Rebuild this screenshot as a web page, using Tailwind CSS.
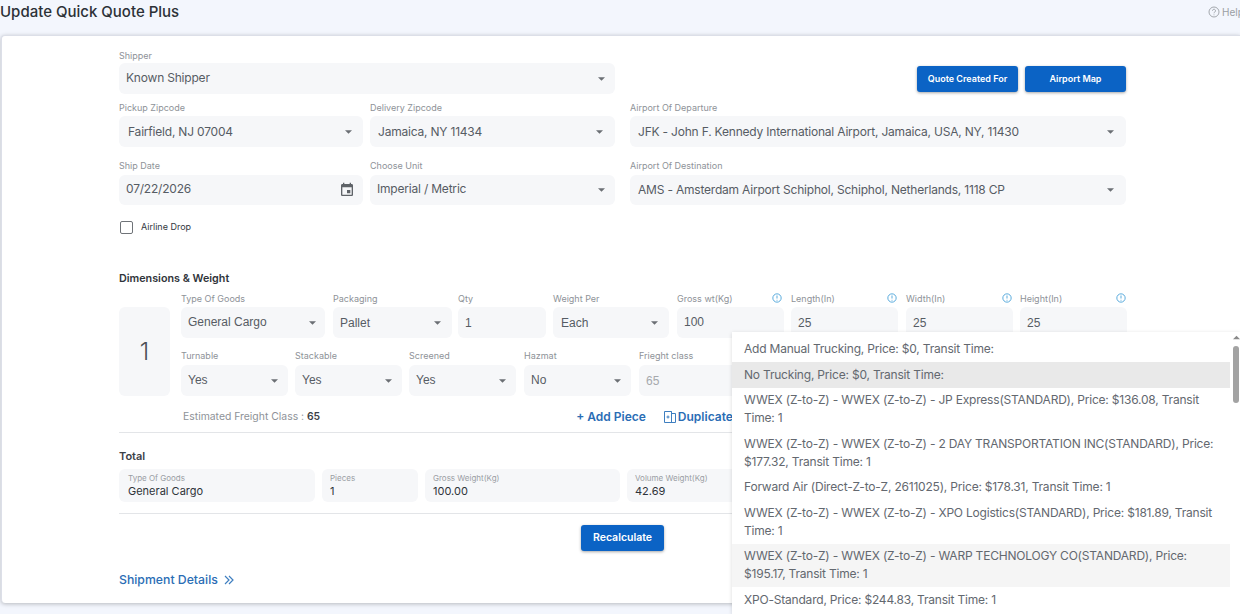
<!DOCTYPE html>
<html lang="en">
<head>
  <meta charset="UTF-8" />
  <title>Update Quick Quote Plus</title>
  <script src="https://cdn.jsdelivr.net/npm/@tailwindcss/browser@4"></script>
</head>
<body class="relative w-[1240px] h-[614px] overflow-hidden bg-[#f3f6fd] font-['Inter','Liberation_Sans',sans-serif] text-[#565c64]">

  <header class="h-[35px] flex justify-between pr-0">
    <h1 class="text-[15px] leading-[24px] font-medium text-[#2c3137]">Update Quick Quote Plus</h1>
    <div class="flex items-start gap-[2px] pt-[6px] text-[10px] leading-[13px] text-[#9a9ea4] w-[32px] overflow-hidden shrink-0">
      <svg class="w-[12px] h-[12px] shrink-0" viewBox="0 0 24 24" fill="none" stroke="#9a9ea4" stroke-width="1.8"><circle cx="12" cy="12" r="10"/><path d="M9 9.5a3 3 0 1 1 4.6 2.5c-1 .7-1.6 1.2-1.6 2.5"/><path d="M12 17v1.5"/></svg>
      <span>Help</span>
    </div>
  </header>

  <main class="ml-px h-[568px] bg-white rounded-l-[4px] border-t border-l border-[#dcdfe8] shadow-[0_1px_4px_rgba(0,0,0,0.25)] pl-[117px]">
    <div class="w-[1007px]">

      <!-- shipper row -->
      <div class="flex justify-between pt-[13px]">
        <div class="w-[496px]">
          <label class="block h-[14px] text-[9px] leading-[14px] text-[#8e9298]">Shipper</label>
          <div class="h-[31px] pl-[7px] pr-[10px] bg-[#f6f7f9] rounded-md flex items-center justify-between text-[12px] tracking-[-0.2px]">
            <span class="-mt-[2px]">Known Shipper</span>
            <svg class="w-[7px] h-[4px]" viewBox="0 0 8 4"><path d="M0 0h8L4 4z" fill="#6b6f74"/></svg>
          </div>
        </div>
        <div class="flex gap-[7px] pt-[17px]">
          <button class="w-[101px] h-[26px] bg-[#0b63c5] rounded-[3px] text-white text-[9px] font-semibold shadow-[0_1px_3px_rgba(0,0,0,0.35)]">Quote Created For</button>
          <button class="w-[101px] h-[26px] bg-[#0b63c5] rounded-[3px] text-white text-[9px] font-semibold shadow-[0_1px_3px_rgba(0,0,0,0.35)]">Airport Map</button>
        </div>
      </div>

      <!-- zip / airport of departure -->
      <div class="flex mt-[7px]">
        <div class="w-[244px]">
          <label class="block h-[15px] text-[9px] leading-[14px] text-[#8e9298]">Pickup Zipcode</label>
          <div class="h-[31px] pl-[9px] pr-[11px] bg-[#f6f7f9] rounded-md flex items-center justify-between text-[12px] tracking-[-0.2px]">
            <span>Fairfield, NJ 07004</span>
            <svg class="w-[7px] h-[4px]" viewBox="0 0 8 4"><path d="M0 0h8L4 4z" fill="#6b6f74"/></svg>
          </div>
        </div>
        <div class="w-[245px] ml-[7px]">
          <label class="block h-[15px] text-[9px] leading-[14px] text-[#8e9298]">Delivery Zipcode</label>
          <div class="h-[31px] pl-[8px] pr-[12px] bg-[#f6f7f9] rounded-md flex items-center justify-between text-[12px] tracking-[-0.2px]">
            <span>Jamaica, NY 11434</span>
            <svg class="w-[7px] h-[4px]" viewBox="0 0 8 4"><path d="M0 0h8L4 4z" fill="#6b6f74"/></svg>
          </div>
        </div>
        <div class="w-[496px] ml-[15px]">
          <label class="block h-[15px] text-[9px] leading-[14px] text-[#8e9298]">Airport Of Departure</label>
          <div class="h-[31px] pl-[8px] pr-[12px] bg-[#f6f7f9] rounded-md flex items-center justify-between text-[12px] tracking-[-0.2px]">
            <span>JFK - John F. Kennedy International Airport, Jamaica, USA, NY, 11430</span>
            <svg class="w-[7px] h-[4px]" viewBox="0 0 8 4"><path d="M0 0h8L4 4z" fill="#6b6f74"/></svg>
          </div>
        </div>
      </div>

      <!-- date / unit / destination -->
      <div class="flex mt-[12px]">
        <div class="w-[244px]">
          <label class="block h-[16px] text-[9px] leading-[14px] text-[#8e9298]">Ship Date</label>
          <div class="h-[30px] pl-[7px] pr-[8px] bg-[#f6f7f9] rounded-md flex items-center justify-between text-[12px] tracking-[-0.2px]">
            <span class="-mt-[2px]">07/22/2026</span>
            <svg class="w-[16px] h-[16px]" viewBox="0 0 24 24"><path d="M17 12h-5v5h5v-5zM16 1v2H8V1H6v2H5c-1.11 0-1.99.9-1.99 2L3 19c0 1.1.89 2 2 2h14c1.1 0 2-.9 2-2V5c0-1.1-.9-2-2-2h-1V1h-2zm3 18H5V8h14v11z" fill="#5f6368"/></svg>
          </div>
        </div>
        <div class="w-[245px] ml-[7px]">
          <label class="block h-[16px] text-[9px] leading-[14px] text-[#8e9298]">Choose Unit</label>
          <div class="h-[30px] pl-[7px] pr-[10px] bg-[#f6f7f9] rounded-md flex items-center justify-between text-[12px] tracking-[-0.2px]">
            <span class="-mt-[2px]">Imperial / Metric</span>
            <svg class="w-[7px] h-[4px]" viewBox="0 0 8 4"><path d="M0 0h8L4 4z" fill="#6b6f74"/></svg>
          </div>
        </div>
        <div class="w-[496px] ml-[15px]">
          <label class="block h-[16px] text-[9px] leading-[14px] text-[#8e9298]">Airport Of Destination</label>
          <div class="h-[30px] pl-[8px] pr-[12px] bg-[#f6f7f9] rounded-md flex items-center justify-between text-[12px] tracking-[-0.2px]">
            <span>AMS - Amsterdam Airport Schiphol, Schiphol, Netherlands, 1118 CP</span>
            <svg class="w-[7px] h-[4px]" viewBox="0 0 8 4"><path d="M0 0h8L4 4z" fill="#6b6f74"/></svg>
          </div>
        </div>
      </div>

      <div class="flex items-center mt-[15px] h-[14px] pl-px gap-[8px]">
        <span class="w-[13px] h-[13px] border-[1.5px] border-[#6f7378] rounded-[2px]"></span>
        <span class="text-[9px] text-[#33383e]">Airline Drop</span>
      </div>

      <!-- dimensions -->
      <h2 class="mt-[38px] text-[10.75px] leading-[14px] font-semibold text-[#2f343a]">Dimensions &amp; Weight</h2>

      <div class="flex mt-[6px]">
        <div class="w-[51px] h-[89px] mt-[15px] shrink-0 bg-[#f6f7f9] rounded-md flex items-center justify-center text-[24px] font-light text-[#4b5056]">1</div>
        <div class="ml-[11px] shrink-0">
          <div class="flex">
            <div class="w-[144px]">
              <label class="block h-[15px] text-[9px] leading-[14px] text-[#8e9298]">Type Of Goods</label>
              <div class="h-[31px] pl-[7px] pr-[9px] bg-[#f6f7f9] rounded-md flex items-center justify-between font-['Liberation_Sans',sans-serif] text-[12px]">
                <span class="-mt-[2px]">General Cargo</span>
                <svg class="w-[7px] h-[4px]" viewBox="0 0 8 4"><path d="M0 0h8L4 4z" fill="#6b6f74"/></svg>
              </div>
            </div>
            <div class="w-[119px] ml-[8px]">
              <label class="block h-[15px] text-[9px] leading-[14px] text-[#8e9298]">Packaging</label>
              <div class="h-[31px] pl-[7px] pr-[11px] bg-[#f6f7f9] rounded-md flex items-center justify-between font-['Liberation_Sans',sans-serif] text-[12px]">
                <span>Pallet</span>
                <svg class="w-[7px] h-[4px]" viewBox="0 0 8 4"><path d="M0 0h8L4 4z" fill="#6b6f74"/></svg>
              </div>
            </div>
            <div class="w-[88px] ml-[6px]">
              <label class="block h-[15px] text-[9px] leading-[14px] text-[#8e9298]">Qty</label>
              <div class="h-[31px] pl-[7px] bg-[#f6f7f9] rounded-md flex items-center font-['Liberation_Sans',sans-serif] text-[12px]">
                <span>1</span>
              </div>
            </div>
            <div class="w-[116px] ml-[7px]">
              <label class="block h-[15px] text-[9px] leading-[14px] text-[#8e9298]">Weight Per</label>
              <div class="h-[31px] pl-[8px] pr-[11px] bg-[#f6f7f9] rounded-md flex items-center justify-between font-['Liberation_Sans',sans-serif] text-[12px]">
                <span>Each</span>
                <svg class="w-[7px] h-[4px]" viewBox="0 0 8 4"><path d="M0 0h8L4 4z" fill="#6b6f74"/></svg>
              </div>
            </div>
            <div class="w-[107px] ml-[8px]">
              <div class="flex justify-between items-start h-[15px] pr-[2px]">
                <label class="text-[9px] leading-[14px] text-[#8e9298]">Gross wt(Kg)</label>
                <svg class="w-[10px] h-[10px] mt-px" viewBox="0 0 12 12" fill="none" stroke="#3b9bd6"><circle cx="6" cy="6" r="5"/><path d="M6 3v3.6M6 8.2v1"/></svg>
              </div>
              <div class="h-[31px] pl-[7px] bg-[#f6f7f9] rounded-md flex items-center font-['Liberation_Sans',sans-serif] text-[12px]">
                <span class="-mt-[2px]">100</span>
              </div>
            </div>
            <div class="w-[107px] ml-[7px]">
              <div class="flex justify-between items-start h-[15px] pr-[1px]">
                <label class="text-[9px] leading-[14px] text-[#8e9298]">Length(In)</label>
                <svg class="w-[10px] h-[10px] mt-px" viewBox="0 0 12 12" fill="none" stroke="#3b9bd6"><circle cx="6" cy="6" r="5"/><path d="M6 3v3.6M6 8.2v1"/></svg>
              </div>
              <div class="h-[31px] pl-[7px] bg-[#f6f7f9] rounded-md flex items-center font-['Liberation_Sans',sans-serif] text-[12px]">
                <span>25</span>
              </div>
            </div>
            <div class="w-[107px] ml-[8px]">
              <div class="flex justify-between items-start h-[15px] pr-[1px]">
                <label class="text-[9px] leading-[14px] text-[#8e9298]">Width(In)</label>
                <svg class="w-[10px] h-[10px] mt-px" viewBox="0 0 12 12" fill="none" stroke="#3b9bd6"><circle cx="6" cy="6" r="5"/><path d="M6 3v3.6M6 8.2v1"/></svg>
              </div>
              <div class="h-[31px] pl-[7px] bg-[#f6f7f9] rounded-md flex items-center font-['Liberation_Sans',sans-serif] text-[12px]">
                <span>25</span>
              </div>
            </div>
            <div class="w-[107px] ml-[7px]">
              <div class="flex justify-between items-start h-[15px] pr-[1px]">
                <label class="text-[9px] leading-[14px] text-[#8e9298]">Height(In)</label>
                <svg class="w-[10px] h-[10px] mt-px" viewBox="0 0 12 12" fill="none" stroke="#3b9bd6"><circle cx="6" cy="6" r="5"/><path d="M6 3v3.6M6 8.2v1"/></svg>
              </div>
              <div class="h-[31px] pl-[7px] bg-[#f6f7f9] rounded-md flex items-center font-['Liberation_Sans',sans-serif] text-[12px]">
                <span>25</span>
              </div>
            </div>
          </div>

          <div class="flex mt-[11px]">
            <div class="w-[107px]">
              <label class="block h-[16px] text-[9px] leading-[14px] text-[#8e9298]">Turnable</label>
              <div class="h-[31px] pl-[7px] pr-[10px] bg-[#f6f7f9] rounded-md flex items-center justify-between font-['Liberation_Sans',sans-serif] text-[12px]">
                <span class="-mt-[2px]">Yes</span>
                <svg class="w-[7px] h-[4px]" viewBox="0 0 8 4"><path d="M0 0h8L4 4z" fill="#6b6f74"/></svg>
              </div>
            </div>
            <div class="w-[107px] ml-[7px]">
              <label class="block h-[16px] text-[9px] leading-[14px] text-[#8e9298]">Stackable</label>
              <div class="h-[31px] pl-[7px] pr-[10px] bg-[#f6f7f9] rounded-md flex items-center justify-between font-['Liberation_Sans',sans-serif] text-[12px]">
                <span class="-mt-[2px]">Yes</span>
                <svg class="w-[7px] h-[4px]" viewBox="0 0 8 4"><path d="M0 0h8L4 4z" fill="#6b6f74"/></svg>
              </div>
            </div>
            <div class="w-[107px] ml-[7px]">
              <label class="block h-[16px] text-[9px] leading-[14px] text-[#8e9298]">Screened</label>
              <div class="h-[31px] pl-[7px] pr-[10px] bg-[#f6f7f9] rounded-md flex items-center justify-between font-['Liberation_Sans',sans-serif] text-[12px]">
                <span class="-mt-[2px]">Yes</span>
                <svg class="w-[7px] h-[4px]" viewBox="0 0 8 4"><path d="M0 0h8L4 4z" fill="#6b6f74"/></svg>
              </div>
            </div>
            <div class="w-[107px] ml-[8px]">
              <label class="block h-[16px] text-[9px] leading-[14px] text-[#8e9298]">Hazmat</label>
              <div class="h-[31px] pl-[7px] pr-[10px] bg-[#f6f7f9] rounded-md flex items-center justify-between font-['Liberation_Sans',sans-serif] text-[12px]">
                <span class="-mt-[2px]">No</span>
                <svg class="w-[7px] h-[4px]" viewBox="0 0 8 4"><path d="M0 0h8L4 4z" fill="#6b6f74"/></svg>
              </div>
            </div>
            <div class="w-[107px] ml-[8px]">
              <label class="block h-[16px] text-[9px] leading-[14px] text-[#8e9298]">Frieght class</label>
              <div class="h-[31px] pl-[7px] bg-[#f6f7f9] rounded-md flex items-center font-['Liberation_Sans',sans-serif] text-[12px] text-[#a6a9ad]">
                <span>65</span>
              </div>
            </div>
          </div>
        </div>
      </div>

      <div class="flex items-center h-[14px] mt-[14px] pl-[64px] text-[10.4px]">
        <span class="text-[#8e9298] whitespace-nowrap">Estimated Freight Class : <b class="font-semibold text-[#3c4147]">65</b></span>
        <span class="ml-[256px] text-[12px] font-semibold text-[#2a6db5] whitespace-nowrap">+ Add Piece</span>
        <svg class="ml-[17px] w-[14px] h-[14px]" viewBox="0 0 14 14" fill="none" stroke="#3f7fc0"><path d="M1.5 1.5h7v2h4v9h-11z"/><path d="M8.5 1.5v11M3.5 7h3M5 5.5v3"/></svg>
        <span class="ml-px text-[12px] font-semibold text-[#2a6db5]">Duplicate</span>
      </div>

      <div class="mt-[8px] h-px bg-[#e3e5e8]"></div>

      <h2 class="mt-[16px] text-[11px] leading-[14px] font-semibold text-[#3c4147]">Total</h2>
      <div class="flex mt-[6px] gap-[7px]">
        <div class="w-[196px] h-[33px] pl-[9px] pt-[4px] bg-[#f6f7f9] rounded-md">
          <div class="text-[8px] leading-[11px] text-[#9a9ea4]">Type Of Goods</div>
          <div class="text-[11px] leading-[14px] text-[#2f343a]">General Cargo</div>
        </div>
        <div class="w-[96px] h-[33px] pl-[8px] pt-[4px] bg-[#f6f7f9] rounded-md">
          <div class="text-[8px] leading-[11px] text-[#9a9ea4]">Pieces</div>
          <div class="text-[11px] leading-[14px] text-[#2f343a]">1</div>
        </div>
        <div class="w-[195px] h-[33px] pl-[8px] pt-[4px] bg-[#f6f7f9] rounded-md">
          <div class="text-[8px] leading-[11px] text-[#9a9ea4]">Gross Weight(Kg)</div>
          <div class="text-[11px] leading-[14px] text-[#2f343a]">100.00</div>
        </div>
        <div class="w-[195px] h-[33px] pl-[8px] pt-[4px] bg-[#f6f7f9] rounded-md">
          <div class="text-[8px] leading-[11px] text-[#9a9ea4]">Volume Weight(Kg)</div>
          <div class="text-[11px] leading-[14px] text-[#2f343a]">42.69</div>
        </div>
      </div>

      <div class="mt-[11px] h-px bg-[#e3e5e8]"></div>

      <div class="flex mt-[11px] pl-[462px]">
        <button class="w-[83px] h-[26px] bg-[#0b63c5] rounded-[3px] text-white text-[10.5px] font-semibold shadow-[0_1px_3px_rgba(0,0,0,0.35)]">Recalculate</button>
      </div>

      <div class="flex items-center gap-[6px] mt-[21px] h-[16px] text-[12.25px] font-medium text-[#2a6db5]">
        <span>Shipment Details</span>
        <svg class="w-[10px] h-[10px]" viewBox="0 0 10 10" fill="none" stroke="#3f7fc0" stroke-width="1.2"><path d="M1 1l4 4-4 4M5 1l4 4-4 4"/></svg>
      </div>
    </div>
  </main>

  <!-- trucking options dropdown -->
  <div class="absolute left-[732px] top-[332px] w-[508px] h-[282px] bg-white shadow-[0_1px_4px_rgba(0,0,0,0.15)] pt-[4.5px] pr-[10px] text-[12px] tracking-[-0.2px] leading-[18px] text-[#63686f]">
    <div class="px-[12px] py-[3.75px]">Add Manual Trucking, Price: $0, Transit Time:</div>
    <div class="px-[12px] py-[3.75px] bg-[#e9e9e9]">No Trucking, Price: $0, Transit Time:</div>
    <div class="px-[12px] py-[3.75px]">WWEX (Z-to-Z) - WWEX (Z-to-Z) - JP Express(STANDARD), Price: $136.08, Transit Time: 1</div>
    <div class="px-[12px] py-[3.75px]">WWEX (Z-to-Z) - WWEX (Z-to-Z) - 2 DAY TRANSPORTATION INC(STANDARD), Price: $177.32, Transit Time: 1</div>
    <div class="px-[12px] py-[3.75px]">Forward Air (Direct-Z-to-Z, 2611025), Price: $178.31, Transit Time: 1</div>
    <div class="px-[12px] py-[3.75px]">WWEX (Z-to-Z) - WWEX (Z-to-Z) - XPO Logistics(STANDARD), Price: $181.89, Transit Time: 1</div>
    <div class="px-[12px] py-[3.75px] bg-[#f5f5f5]">WWEX (Z-to-Z) - WWEX (Z-to-Z) - WARP TECHNOLOGY CO(STANDARD), Price: $195.17, Transit Time: 1</div>
    <div class="px-[12px] py-[3.75px]">XPO-Standard, Price: $244.83, Transit Time: 1</div>

    <!-- scrollbar -->
    <div class="absolute right-0 top-0 w-[8px] h-full bg-white">
      <svg class="absolute left-[1px] top-[3px] w-[7px] h-[5px]" viewBox="0 0 8 4"><path d="M4 0l4 4H0z" fill="#8a8a8a"/></svg>
      <div class="absolute left-[1px] top-[14px] w-[6px] h-[57px] rounded-full bg-[#a3a3a3]"></div>
    </div>
  </div>

</body>
</html>
